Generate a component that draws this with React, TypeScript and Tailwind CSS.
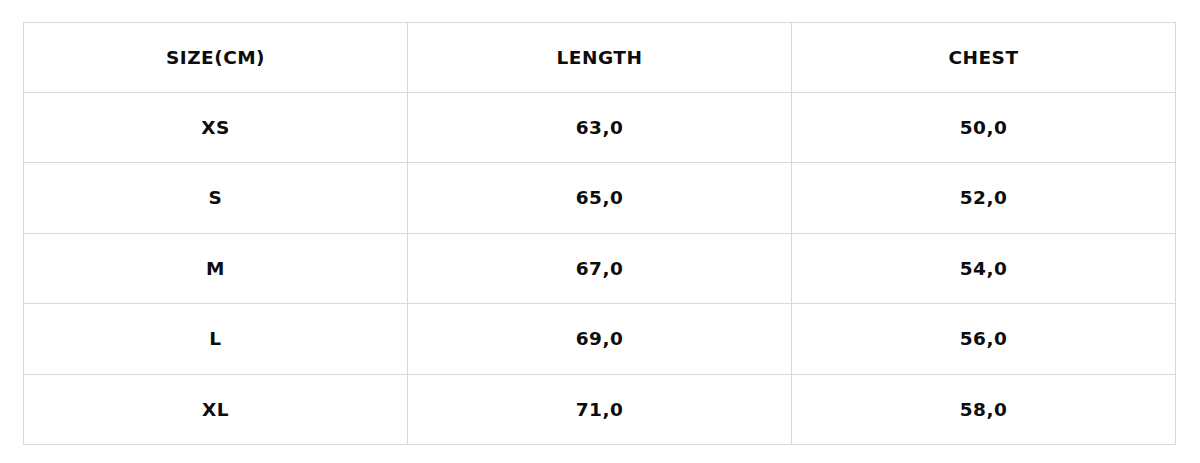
import React from 'react';

const headers = ['SIZE(CM)', 'LENGTH', 'CHEST'];

const rows: [string, string, string][] = [
    ['XS', '63,0', '50,0'],
    ['S', '65,0', '52,0'],
    ['M', '67,0', '54,0'],
    ['L', '69,0', '56,0'],
    ['XL', '71,0', '58,0'],
];

// row pitches measured from the reference
const rowHeights = ['h-[70px]', 'h-[71px]', 'h-[70px]', 'h-[71px]', 'h-[70px]'];

export default function App() {
    return (
        <div className="w-[1200px] h-[463px] bg-white pl-[23px] pr-[24px] pt-[22px]" style={{ fontFamily: '"DejaVu Sans", "Liberation Sans", sans-serif' }}>
            <table className="w-full border-collapse table-fixed text-[#0d0d0d] font-bold text-[18.5px]">
                <thead>
                    <tr>
                        {headers.map(h => (
                            <th key={h} className="border border-[#d9d9d9] h-[70px] text-center font-bold tracking-[0.5px]">{h}</th>
                        ))}
                    </tr>
                </thead>
                <tbody>
                    {rows.map((r, ri) => (
                        <tr key={r[0]}>
                            {r.map((c, i) => (
                                <td key={i} className={`border border-[#d9d9d9] ${rowHeights[ri]} text-center tracking-[0.5px]`}>{c}</td>
                            ))}
                        </tr>
                    ))}
                </tbody>
            </table>
        </div>
    );
}
